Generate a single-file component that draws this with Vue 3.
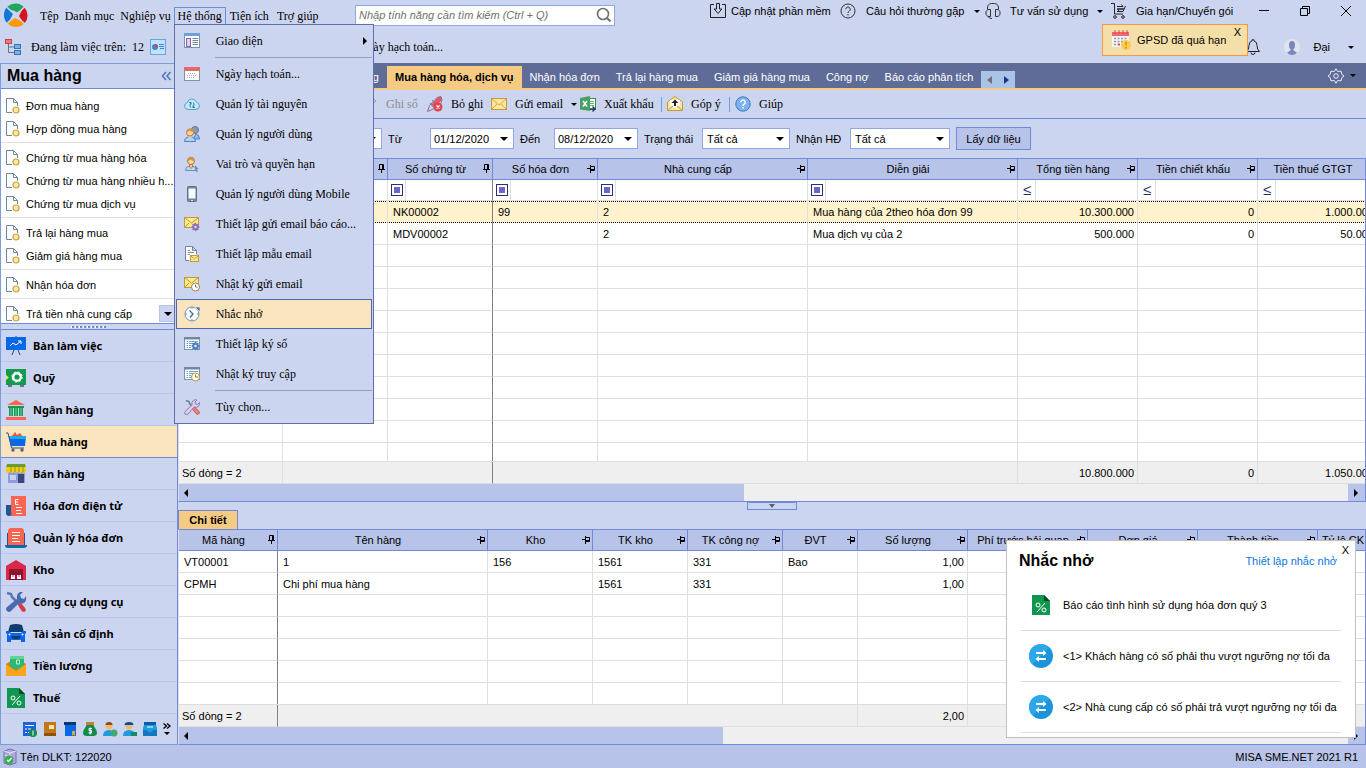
<script setup>
import { ref } from 'vue'

const pen = (c) => `fill="none" stroke="${c}"`
const badge = (x, y) => `<circle cx="${x}" cy="${y}" r="3" fill="#ffe9a0" stroke="#c8a04a" stroke-width="1.200"/>`

const icons = {
  logo: '<path d="M12 12 3.500 3.500A12 12 0 0 1 20.500 4.500Z" fill="#22a65b"/><path d="M12 12 20.500 4.500A12 12 0 0 1 20.500 20.500Z" fill="#d8151d"/><path d="M12 12 20.500 20.500A12 12 0 0 1 3.500 20.500Z" fill="#fb9a0c"/><path d="M12 12 3.500 20.500A12 12 0 0 1 3.500 3.500Z" fill="#0f78d4"/><path d="M2.500 4 21 21M21 3.500 3 20.500" fill="none" stroke="#ccd5f0" stroke-width="1.500"/><path d="M5.500 6.500 10.500 8 13 9.500 18.500 6 16 11 15 13 18.500 18.500 13 16 11 15 5 18.500 8 13 9 10.500Z" fill="#ccd5f0"/>',
  tree: `<rect x=".5" y=".5" width="6" height="4" fill="#f07c78" stroke="#b84a4a"/><path d="M3.500 5v8.500H9M3.500 8H9" ${pen('#66758c')}/><rect x="9.500" y="5.500" width="6" height="4" fill="#77b1ec" stroke="#3c6fb4"/><rect x="9.500" y="11.500" width="6" height="4" fill="#77b1ec" stroke="#3c6fb4"/>`,
  report: `<rect x=".5" y=".5" width="15" height="15" fill="#bfe3fb" stroke="#69a5dc"/><circle cx="5" cy="8" r="3" fill="#4b7fd0"/><path d="M5 8V5a3 3 0 0 1 3 3Z" fill="#d8405a"/><path d="M9 5.500h5M9 7.500h5M10 9.500h4" ${pen('#4b7fd0')}/>`,
  search: `<circle cx="7" cy="7" r="5.500" ${pen('#707070')} stroke-width="1.600"/><path d="m11 11 3.500 3.500" ${pen('#707070')} stroke-width="2"/>`,
  update: `<path d="M4 1.500H.5v13h15v-13H12" ${pen('#222')}/><path d="M6.500.5h3V6h2.300L8 10.500 4.200 6h2.300Z" ${pen('#222')}/>`,
  faq: `<circle cx="8" cy="8" r="7" ${pen('#333')}/><path d="M5.800 6.200a2.200 2.200 0 1 1 3.400 1.900Q8 8.800 8 10" ${pen('#333')}/><path d="M8 11v1.500" ${pen('#333')}/>`,
  headset: `<path d="M2.500 6.500V5a4.500 4.500 0 0 1 4-4.500h3a4.500 4.500 0 0 1 4 4.500v1.500" ${pen('#333')}/><path d="M5.500 6.500v7H4a3 3 0 0 1-3-3.500 3 3 0 0 1 3-3.500ZM10.500 6.500H12a3 3 0 0 1 3 3.500 3 3 0 0 1-3 3.500h-1.500ZM3 13.500Q4 15.500 7 15.500" ${pen('#333')}/>`,
  cart: `<path d="M0 .5h3.500V11H12M6 6h7M6 8.500h6L14.500 3" ${pen('#222')}/><path d="M6 3.500h6L10.500 1.500M12.500 6h-6l1.500 2" ${pen('#222')}/><circle cx="4" cy="14" r="1.300" ${pen('#222')}/><circle cx="12" cy="14" r="1.300" ${pen('#222')}/>`,
  bell: `<path d="M1.500 12.500h13Q12 10.500 12 6.500 12 2.500 9 2V.8H7V2Q4 2.500 4 6.500 4 10.500 1.500 12.500Z" ${pen('#222')}/><path d="M6 13.500a2 2 0 0 0 4 0" ${pen('#222')}/>`,
  avatar: '<circle cx="8" cy="8" r="8" fill="#e1e4ec"/><path d="M5 6a3 4 0 1 1 6 0q0 3-1.500 4v1.500L13 13.500Q11 16 8 16t-5-2.500L6.500 11.500V10Q5 9 5 6Z" fill="#7688bd"/>',
  gear: `<path d="m8 .8 1.800 2.700 3.300-.3.600 3L16 8l-2.300 1.800-.6 3-3.300-.3L8 15.200l-1.800-2.700-3.300.3-.6-3L0 8l2.300-1.800.6-3 3.300.3Z" ${pen('#e8ecf8')}/><circle cx="8" cy="8" r="2.300" ${pen('#e8ecf8')}/>`,
  calendarAlert: '<rect x="1" y="3" width="17" height="14" fill="#f4f4f6"/><path d="M1 2h17v4H1Z" fill="#f0686c"/><path d="M4 0v4M8 0v4M12 0v4M16 0v4" stroke="#d84850" fill="none"/><path d="M3 8.500h13M3 11.500h10M3 14.500h8" stroke="#9298a8" stroke-width="1.600" stroke-dasharray="2 1.500" fill="none"/><path d="M7 14.500h2" stroke="#e85058" stroke-width="2"/><circle cx="15" cy="15" r="5" fill="#fbcb50"/><path d="M15 11.500v4M15 17v1.500" stroke="#e88a20" stroke-width="1.600"/>',
  doc: `<path d="M.5.5h7l4 4V8M7.500.5v4h4M6 14.500H.5V.5" ${pen('#6c86a0')}/>` + badge(10, 12),
  layout: `<rect x=".5" y=".5" width="15" height="14" fill="#fff" stroke="#7b93ab"/><path d="M0 0h16v3H0Z" fill="#6aa3dc"/><rect x="2.500" y="5.500" width="4" height="8" fill="#e0cdf0" stroke="#8268a8"/><path d="M8.500 5.500H14M8.500 7.500H14M8.500 9.500H14M8.500 11.500H14" ${pen('#6c86a0')}/>`,
  calendar: `<rect x=".5" y="1.500" width="15" height="13" fill="#fff" stroke="#7b93ab"/><path d="M0 1h16v4H0Z" fill="#e0696b"/><path d="M4 7.500h8M3 9.500h10M3 11.500h7" ${pen('#a6b4c8')} stroke-dasharray="1 1"/>`,
  cloud: `<path d="M4 13.500a3.500 3.500 0 0 1-.7-6.900 4.800 4.800 0 0 1 9.200-.4A3.700 3.700 0 0 1 12 13.500Z" fill="#c4e8fb" stroke="#5f9fce"/><path d="M6.500 11.500q-1.500-2.500.5-5M5 6.500h2v2M9.500 6.500q1.500 2.500-.5 5M11 11.500H9v-2" ${pen('#3a78b8')}/>`,
  users: `<circle cx="11" cy="4" r="3.500" fill="#8a9aa8" stroke="#64788c"/><path d="M9 13h6.500q0-4-3.500-5Z" fill="#8cbcec" stroke="#4c84c4"/><path d="M.5 15.500q0-4 3.500-4.500h4q3.500.5 3.500 4.500Z" fill="#a8d4f8" stroke="#4c84c4"/><path d="M4.500 9.500v2L6 13l1.500-1.500v-2Z" fill="#f7c983"/><circle cx="6" cy="6.500" r="3.500" fill="#f9d8a0" stroke="#bf7640"/><path d="M2.500 6q.5-4 4-3.500T9.500 6q-3 0-4-1.500Q4.500 6 2.500 6Z" fill="#d89050"/>`,
  role: `<path d="M1.500 14.500q0-4 4-4.500h3q4 .5 4 4.500Z" fill="#b4dcf8" stroke="#5c94cc"/><path d="M5.500 8.500V11L7 12.500 8.500 11V8.500Z" fill="#f7c983" stroke="#bf7640"/><circle cx="7" cy="5" r="3.500" fill="#f9d8a0" stroke="#bf7640"/><path d="M3.500 5Q3.500.8 7 .8T10.500 5Q8 5 6.500 3.500 5.500 5 3.500 5Z" fill="#d09050"/><path d="m11 9.500 4 3.500h-2l1 2.500-1.500.5-.8-2.500-.7 1Z" fill="#7c8ca4"/>`,
  mobile: `<rect x="3.500" y=".5" width="9" height="15" rx="1" fill="#74869c" stroke="#5c7088"/><rect x="4.500" y="2.500" width="7" height="10" fill="#f4fafe"/><path d="M7 14.500h2" ${pen('#d8e0e8')}/>`,
  mailGear: `<rect x=".5" y="1.500" width="14" height="10" fill="#fde98c" stroke="#c69840"/><path d="m1 2 6.500 5L14 2M1 11l4-4M10 7l4 4" ${pen('#c69840')}/><path d="m11.500 6.500 1.200 1.600 2-.4-.3 2L16 11l-1.600 1.300.3 2-2-.4-1.200 1.600-1.200-1.600-2 .4.300-2L7 11l1.600-1.300-.3-2 2 .4Z" fill="#8c74b4"/><circle cx="11.500" cy="11" r="1.300" fill="#d8ccec"/>`,
  mailTemplate: `<path d="M5 14.500H1.500V.5h7l4 4V8M8.500.5v4h4" fill="#fff" stroke="#6c86a0"/><path d="M3.500 4.500H6M3.500 6.500H10M3.500 8.500H6" ${pen('#7c94ac')}/><rect x="6.500" y="9.500" width="8" height="6" fill="#fde98c" stroke="#c69840"/><path d="m7 10 3.500 3L14 10" ${pen('#c69840')}/>`,
  mailClock: `<rect x=".5" y="1.500" width="14" height="10" fill="#fde98c" stroke="#c69840"/><path d="m1 2 6.500 5L14 2M1 11l4-4" ${pen('#c69840')}/><circle cx="11.500" cy="11" r="4" fill="#fff" stroke="#9a8458"/><path d="M11.500 8.500V11h2" ${pen('#6c7484')}/>`,
  reminder: `<circle cx="8" cy="8" r="7" fill="#f8fcff" stroke="#7094bc"/><path d="M11 1h5v5Z" fill="#3d6eb4" stroke="#fae4be" stroke-width=".8"/><path d="M8 1v2M8 13v2M1 8h2M13 8h2" ${pen('#7094bc')}/><path d="M5.500 4.500 9 8l-3 3.500" ${pen('#4c6a8c')} stroke-width="1.300"/>`,
  signSetup: `<rect x=".5" y="1.500" width="15" height="12" fill="#fff" stroke="#7b93ab"/><path d="M0 1h16v2.500H0Z" fill="#74869c"/><path d="M2.500 5.500H4M5 5.500h9M2.500 7.500H4M5 7.500h4M2.500 9.500H4M5 9.500h2M2.500 11.500H4M5 11.500h2" ${pen('#6aa3dc')}/><path d="m11.500 5.500 1.200 1.600 2-.4-.3 2L16 10l-1.600 1.300.3 2-2-.4-1.200 1.600-1.200-1.600-2 .4.300-2L7 10l1.600-1.300-.3-2 2 .4Z" fill="#4c7cbc"/><circle cx="11.500" cy="10" r="1.300" fill="#dce8f8"/>`,
  accessLog: `<rect x=".5" y="1.500" width="15" height="12" fill="#fff" stroke="#7b93ab"/><path d="M0 1h16v2.500H0Z" fill="#74869c"/><path d="M2.500 5.500H4M5 5.500h9M2.500 7.500H4M5 7.500h4M2.500 9.500H4M5 9.500h2M2.500 11.500H4M5 11.500h2" ${pen('#6aa3dc')}/><circle cx="11.500" cy="11" r="4" fill="#fffbe8" stroke="#b89448"/><path d="M11.500 8.500V11H14" ${pen('#8c7440')}/>`,
  tools: `<path d="m2 1.500 3 1 .5 2L13 12" ${pen('#6c8094')} stroke-width="1.500"/><path d="m8.500 10 2-2 4.500 4.500q1 2-.5 2.500-1.500.8-2.500-.5Z" fill="#ec8480" stroke="#c45458"/><path d="M1 15q-1-1.500.3-2.700L8 6q-.8-3 1.500-4.700Q11.500.2 13 1l-2 2 .5 2 2 .5 2-2q.5 2.500-1.300 4-1.700 1.300-4 .5L4 15q-1.500 1.200-3 0Z" fill="#dccff0" stroke="#8c78ac"/>`,
  post: `<path d="m2 14 1-4L11 2l3 3-8 8Z" fill="#c8ccd4" stroke="#9ca0ac"/>`,
  unpost: `<path d="m.5 15.500 2-6L10 1.500l4-1 1 3-1 4-7.500 5.500Z" fill="#d8ccec" stroke="#8070a8"/><path d="m4 9 7-8 3 0 1 3-7 7Z" fill="#e05860"/><path d="m5 4 6 6M3 7l4 5" ${pen('#8070a8')}/><circle cx="11" cy="11" r="4.500" fill="#dc4850"/><path d="m9.500 9.500 3 3m0-3-3 3" ${pen('#fff')} stroke-width="1.300"/>`,
  mail: `<rect x=".5" y="2.500" width="15" height="11" fill="#fee69a" stroke="#c69840"/><path d="m1 3 7 6 7-6M1 13l5-5M15 13l-5-5" ${pen('#d0a850')}/>`,
  excel: `<rect x="8.500" y="2.500" width="7" height="11" fill="#fff" stroke="#3a8850"/><path d="M10 5.500h4M10 7.500h4M10 9.500h4" ${pen('#68b07c')}/><path d="m0 2 10-2v15L0 13.500Z" fill="#47a066"/><path d="m3 5 4 5.500M7 5l-4 5.500" ${pen('#fff')} stroke-width="1.500"/><path d="M10 13h4M12.500 10.500 15 13l-2.500 2.500" ${pen('#243c50')} stroke-width="1.400"/>`,
  feedback: `<path d="M.5 6 8 .5 15.500 6v8.500H.5Z" fill="#fee69a" stroke="#c69840"/><path d="M3 4h10v5l-5 3-5-3Z" fill="#fff"/><path d="m1 14 5-4M15 14l-5-4" ${pen('#c69840')}/><path d="M8 3.500 4.500 7H7v3h2V7h2.500Z" fill="#222"/>`,
  helpBlue: `<circle cx="8" cy="8" r="7.200" fill="#7db2f2" stroke="#4078b8"/><path d="M5.800 6.200a2.200 2.200 0 1 1 3.400 1.900Q8 8.800 8 10M8 11v1.500" ${pen('#fff')} stroke-width="1.500"/>`,
  pin: `<path d="M3.500.5h4v5h-4ZM2 5.500h7M5.500 6v3M6.500 1v4" ${pen('#000')}/>`,
  pinSide: `<path d="M4.500 2.500h4v4h-4ZM4.500 1v8M1 4.500h3M5 5.500h4" ${pen('#000')}/>`,
  desk: `<path d="M0 1h20v13H0Z" fill="#0868e8"/><path d="M10 0v1M8 14l-2 5M12 14l2 5" ${pen('#1c508c')}/><path d="m4 10 3-3 3 2 5-4M12 5h3v3" ${pen('#fff')}/>`,
  fund: `<path d="M2 17h4v2H2ZM14 17h4v2h-4Z" fill="#687484"/><path d="M0 1h20v16H0Z" fill="#119a50"/><path d="m0 7 3 2.500L0 12Z" fill="#f4e040"/><circle cx="11" cy="9" r="3.800" ${pen('#fff')} stroke-width="2.400"/><circle cx="11" cy="9" r="5.200" ${pen('#fff')} stroke-dasharray="2 2.100"/>`,
  bank: `<path d="m10 0 9 5H1Z" fill="#fa6450"/><path d="M2 6h16v2H2ZM3 8h4v8H3ZM8 8h4v8H8ZM13 8h4v8h-4Z" fill="#119a50"/><path d="M5 8v8M10 8v8M15 8v8" ${pen('#80d0a0')}/><path d="M0 17h20v3H0Z" fill="#fa6450"/>`,
  buy: `<path d="m6 4 3-4 2 3 3-2 3 4Z" fill="#e05840"/><path d="M3 4h17l-1 10H5Z" fill="#0868e8"/><path d="M3 4h17l-.5 3H3.500Z" fill="#20a8e8"/><path d="M0 1h2l3.500 15H18" ${pen('#24508c')}/><circle cx="7" cy="18" r="1.700" fill="#586070"/><circle cx="16" cy="18" r="1.700" fill="#586070"/>`,
  sell: `<path d="M2 7h17v12H2Z" fill="#8c9cdc"/><path d="M12 10h6v9h-6Z" fill="#384878"/><path d="M4 11h6v5H4Z" fill="#c4d0f4"/><path d="M1 0h18l1 4H0Z" fill="#6c9c28"/><path d="M0 3h20v5q-2 2-4 0-2 2-4 0-2 2-4 0-2 2-4 0-2 2-4 0Z" fill="#fac81c"/><path d="M5 3v5M9 3v5M13 3v5M17 3v5" ${pen('#6c9c28')}/>`,
  einvoice: `<path d="M0 9h6v11H3q-3 0-3-3Z" fill="#1c5890"/><path d="M5 0h15v20H4q2-1 1-4Z" fill="#fa6450"/><path d="M12.500 3.500H9.500V8.500H12.500M9.500 6H12M10 11.500h6M10 14.500h5M10 17.500h6" ${pen('#fff')}/>`,
  invoiceMgmt: `<path d="M1 5h18v12H1Z" fill="#1c5890"/><path d="M4 0h12l2 2v15H2V2Z" fill="#fa6450"/><path d="M6 4.500h8M6 7.500h8M6 10.500h6M6 13.500h8" ${pen('#fff')}/><path d="M-1 17h22v1q-1 2-3 2H2q-3 0-3-3Z" fill="#0868a8"/>`,
  store: `<path d="M0 6 10 0l10 6v14H0Z" fill="#dc2848"/><path d="M3 9h14v11H3Z" fill="#8c1430"/><path d="M5 15h4v4H5ZM11 15h4v4h-4Z" fill="#fff"/><path d="M7 15v2M13 15v2" ${pen('#dc2848')}/>`,
  toolkit: `<path d="m1 1 4 1 1 3 9 9" ${pen('#5878b0')} stroke-width="2.500"/><path d="m12 13 3-2 4 5q2 3-1 4-2 0-3-2Z" fill="#d83848"/><path d="M1 19q-2-2 0-4L11 7Q10 2 14 0l3 0-3 3 1 3 3 1 2-3q1 5-2 7-3 1-5 0L5 19q-2 2-4 0Z" fill="#4a6ab0"/>`,
  car: `<path d="M4 1q6-2 12 0l2 7H2Z" fill="#103c70"/><path d="M0 7h3l2 2h10l2-2h3v2l-1 1v8h-4v-2H5v2H1v-8L0 9Z" fill="#0868e8"/><path d="M5 12h10l-2 3H7Z" fill="#103c70"/><circle cx="3.500" cy="10.500" r="1" fill="#fff"/><circle cx="16.500" cy="10.500" r="1" fill="#fff"/>`,
  salary: `<path d="M0 8 10 2l10 6v12H0Z" fill="#e07810"/><path d="M4 0h14v13H4Z" fill="#2cb870"/><path d="M4 0h14v3H4Z" fill="#60d498"/><path d="M10.500 4h3v4h-3Z" ${pen('#c8f0d8')}/><path d="m0 8 10 7 10-7v12H0Z" fill="#fba41c"/>`,
  tax: `<path d="M1 0h12l6 6v14H1Z" fill="#119650"/><path d="M13 0v6h6Z" fill="#064c28"/><circle cx="7" cy="10" r="2" ${pen('#fff')}/><circle cx="13" cy="15" r="2" ${pen('#fff')}/><path d="m6 17 8-9" ${pen('#fff')}/>`,
  miniList: '<path d="M0 0h13v14H0Z" fill="#1c64dc"/><path d="M2 3.500h9M2 7h2M5 7h3M2 10.500h2M5 10.500h2" stroke="#fff" fill="none"/><circle cx="10" cy="11" r="4" fill="#128c4c"/><path d="M10 8.500v5" stroke="#fff"/>',
  miniBook: '<path d="M1 0h12v14H1Z" fill="#c07818"/><path d="M1 11h12v3H1Z" fill="#8c5010"/><path d="M6 3h5v4H6Z" fill="#ffe4a8"/>',
  miniFlag: '<path d="M1 0h12v3H1Z" fill="#0c3870"/><path d="M2 3h11v11H2Z" fill="#0868e8"/><path d="M9 9h3v5l-1.500-1.500L9 14Z" fill="#f4a020"/>',
  miniBag: '<path d="M3 0h8v4H3Z" fill="#c08030"/><path d="M4 3h6q4 5 4 8 0 3-4 3H4q-4 0-4-3 0-3 4-8Z" fill="#128c4c"/><path d="M9 6.500H6v2h2.500v2.500H5.500M7.200 5.500v7" stroke="#fff" fill="none"/>',
  miniPerson: '<circle cx="6" cy="4" r="3.500" fill="#f6b868"/><path d="M2.500 3q0-3 3.500-3t3.500 3Z" fill="#8c4c20"/><path d="M0 14q0-6 6-6t6 6Z" fill="#209cdc"/><circle cx="11" cy="11" r="3.500" fill="#40a874"/>',
  miniWorker: '<circle cx="6" cy="4" r="3.500" fill="#f6b868"/><path d="M1.500 3q0-3 4.500-3t4.500 3Z" fill="#104c90"/><path d="M0 14q0-6 6-6t6 6Z" fill="#209cdc"/><path d="M8 10h6v4H8Z" fill="#128c6c"/>',
  miniInbox: '<path d="M2 0h10l2 6v8H0V6Z" fill="#209cdc"/><path d="M1 0h12v3H1Z" fill="#0c5ca8"/><path d="M0 8h4l1 2h4l1-2h4v6H0Z" fill="#1478c0"/><path d="M4 5h6" stroke="#fff"/>',
  server: `<path d="m1 2 6-2 6 2v12l-6 2-6-2Z" fill="#b0a8dc" stroke="#7870a8"/><path d="m1 2 6 2 6-2M7 4v10M2 6l4 1.500" ${pen('#e4e0f8')}/><circle cx="6" cy="11" r="4.500" fill="#34b050"/><path d="m4 11 1.500 1.500L8.500 9" ${pen('#fff')} stroke-width="1.400"/>`,
  swap: `<circle cx="12" cy="12" r="12" fill="#1c94dc"/><path d="M12 0a12 12 0 0 0-8.500 20.500l17-17A12 12 0 0 0 12 0Z" fill="#30b0ee" opacity=".7"/><path d="M7 9h9M8 15h9" ${pen('#fff')} stroke-width="1.800"/><path d="m14 6 3.500 3L14 12ZM10 12l-3.500 3L10 18Z" fill="#fff"/>`
}

const appMenus = ['Tệp', 'Danh mục', 'Nghiệp vụ']
const appMenusAfter = ['Tiện ích', 'Trợ giúp']

const systemMenu = [
  { icon: 'layout', text: 'Giao diện', sub: true },
  { icon: 'calendar', text: 'Ngày hạch toán...', sep: true },
  { icon: 'cloud', text: 'Quản lý tài nguyên' },
  { icon: 'users', text: 'Quản lý người dùng' },
  { icon: 'role', text: 'Vai trò và quyền hạn' },
  { icon: 'mobile', text: 'Quản lý người dùng Mobile' },
  { icon: 'mailGear', text: 'Thiết lập gửi email báo cáo...' },
  { icon: 'mailTemplate', text: 'Thiết lập mẫu email' },
  { icon: 'mailClock', text: 'Nhật ký gửi email' },
  { icon: 'reminder', text: 'Nhắc nhở', active: true },
  { icon: 'signSetup', text: 'Thiết lập ký số' },
  { icon: 'accessLog', text: 'Nhật ký truy cập' },
  { icon: 'tools', text: 'Tùy chọn...', sep: true }
]

const taskGroups = [
  ['Đơn mua hàng', 'Hợp đồng mua hàng'],
  ['Chứng từ mua hàng hóa', 'Chứng từ mua hàng nhiều h...', 'Chứng từ mua dịch vụ'],
  ['Trả lại hàng mua', 'Giảm giá hàng mua'],
  ['Nhận hóa đơn'],
  ['Trả tiền nhà cung cấp']
]

const modules = [
  ['desk', 'Bàn làm việc'], ['fund', 'Quỹ'], ['bank', 'Ngân hàng'], ['buy', 'Mua hàng'],
  ['sell', 'Bán hàng'], ['einvoice', 'Hóa đơn điện tử'], ['invoiceMgmt', 'Quản lý hóa đơn'],
  ['store', 'Kho'], ['toolkit', 'Công cụ dụng cụ'], ['car', 'Tài sản cố định'],
  ['salary', 'Tiền lương'], ['tax', 'Thuế']
]
const activeModule = ref('Mua hàng')
const trayIcons = ['miniList', 'miniBook', 'miniFlag', 'miniBag', 'miniPerson', 'miniWorker', 'miniInbox']

const tabs = ['Mua hàng hóa, dịch vụ', 'Nhận hóa đơn', 'Trả lại hàng mua', 'Giảm giá hàng mua', 'Công nợ', 'Báo cáo phân tích']

const fromDate = ref('01/12/2020')
const toDate = ref('08/12/2020')

const voucherCols = [
  { w: 104, t: '', pin: 'pin' },
  { w: 105, t: '', pin: 'pin' },
  { w: 105, t: 'Số chứng từ', pin: 'pin', frozen: true },
  { w: 105, t: 'Số hóa đơn', pin: 'pinSide' },
  { w: 210, t: 'Nhà cung cấp', pin: 'pinSide' },
  { w: 210, t: 'Diễn giải', pin: 'pinSide' },
  { w: 120, t: 'Tổng tiền hàng', pin: 'pinSide', num: true },
  { w: 120, t: 'Tiền chiết khấu', pin: 'pinSide', num: true },
  { w: 120, t: 'Tiền thuế GTGT', pin: 'pinSide', num: true }
]
const voucherRows = [
  ['', '', 'NK00002', '99', '2', 'Mua hàng của 2theo hóa đơn 99', '10.300.000', '0', '1.000.000'],
  ['', '', 'MDV00002', '', '2', 'Mua dịch vụ của 2', '500.000', '0', '50.000']
]

const itemCols = [
  { w: 99, t: 'Mã hàng', pin: 'pin', frozen: true },
  { w: 210, t: 'Tên hàng', pin: 'pinSide' },
  { w: 105, t: 'Kho', pin: 'pinSide' },
  { w: 95, t: 'TK kho', pin: 'pinSide' },
  { w: 95, t: 'TK công nợ', pin: 'pinSide' },
  { w: 75, t: 'ĐVT', pin: 'pinSide' },
  { w: 110, t: 'Số lượng', pin: 'pinSide', num: true },
  { w: 120, t: 'Phí trước hải quan', pin: 'pinSide', num: true },
  { w: 110, t: 'Đơn giá', pin: 'pinSide', num: true },
  { w: 120, t: 'Thành tiền', pin: 'pinSide', num: true },
  { w: 60, t: 'Tỷ lệ CK', pin: 'pinSide', num: true }
]
const itemRows = [
  ['VT00001', '1', '156', '1561', '331', 'Bao', '1,00', '', '', '', ''],
  ['CPMH', 'Chi phí mua hàng', '', '1561', '331', '', '1,00', '', '', '', '']
]

const reminders = [
  ['tax', 'Báo cáo tình hình sử dụng hóa đơn quý 3'],
  ['swap', '<1> Khách hàng có số phải thu vượt ngưỡng nợ tối đa'],
  ['swap', '<2> Nhà cung cấp có số phải trả vượt ngưỡng nợ tối đa']
]
</script>

<template>
  <div class="app">
    <header class="top">
      <div class="top-left">
        <nav class="menubar">
          <svg class="logo" viewBox="0 0 24 24" v-html="icons.logo"></svg>
          <button v-for="m in appMenus" :key="m" class="menu-btn serif">{{ m }}</button>
          <div class="menu-anchor">
            <button class="menu-btn open serif">Hệ thống</button>
            <ul class="dropdown">
              <li v-for="m in systemMenu" :key="m.text" :class="{ sep: m.sep }">
                <button class="drop-item serif" :class="{ active: m.active }">
                  <svg class="i16" viewBox="0 0 16 16" v-html="icons[m.icon]"></svg>
                  <span>{{ m.text }}</span>
                  <i v-if="m.sub" class="arrow right"></i>
                </button>
              </li>
            </ul>
          </div>
          <button v-for="m in appMenusAfter" :key="m" class="menu-btn serif">{{ m }}</button>
        </nav>
        <div class="search">
          <input type="text" aria-label="Tìm kiếm" placeholder="Nhập tính năng cần tìm kiếm (Ctrl + Q)" />
          <button aria-label="Tìm"><svg class="i16" viewBox="0 0 16 16" v-html="icons.search"></svg></button>
        </div>
      </div>
      <div class="top-links">
        <button class="link-update"><svg class="i16" viewBox="0 0 16 16" v-html="icons.update"></svg>Cập nhật phần mềm</button>
        <button class="link-faq"><svg class="i16" viewBox="0 0 16 16" v-html="icons.faq"></svg>Câu hỏi thường gặp<i class="arrow down"></i></button>
        <button class="link-support"><svg class="i16" viewBox="0 0 16 16" v-html="icons.headset"></svg>Tư vấn sử dụng<i class="arrow down"></i></button>
        <button class="link-renew"><svg class="i16" viewBox="0 0 16 16" v-html="icons.cart"></svg>Gia hạn/Chuyển gói</button>
        <button class="win" aria-label="Thu nhỏ"><svg viewBox="0 0 12 12"><path d="M1 5.500h10" stroke="#000" /></svg></button>
        <button class="win" aria-label="Khôi phục"><svg viewBox="0 0 12 12"><path d="M1.500 3.500h7v7h-7ZM3.500 3.500v-2h7v7h-2" fill="none" stroke="#000" /></svg></button>
        <button class="win" aria-label="Đóng"><svg viewBox="0 0 12 12"><path d="m1 1 10 10M11 1 1 11" stroke="#000" /></svg></button>
      </div>
      <div class="context serif">
        <svg class="i16" viewBox="0 0 16 16" v-html="icons.tree"></svg>
        <span class="working">Đang làm việc trên:&nbsp; 12</span>
        <svg class="i16" viewBox="0 0 16 16" v-html="icons.report"></svg>
        <span class="posting-date">Ngày hạch toán...</span>
      </div>
      <div class="account">
        <svg class="i16" viewBox="0 0 16 16" v-html="icons.bell"></svg>
        <svg class="i16 face" viewBox="0 0 16 16" v-html="icons.avatar"></svg>
        <span>Đại</span>
        <i class="arrow down"></i>
      </div>
      <div class="toast">
        <svg viewBox="0 0 20 20" v-html="icons.calendarAlert"></svg>
        <span>GPSD đã quá hạn</span>
        <button aria-label="Đóng">X</button>
      </div>
    </header>

    <div class="body">
      <aside class="side">
        <div class="side-head"><h1>Mua hàng</h1><button aria-label="Thu gọn"><svg viewBox="0 0 10 10"><path d="M5 1 1.500 5 5 9M9.500 1 6 5l3.500 4" fill="none" stroke="#4a72b8" stroke-width="1.400" /></svg></button></div>
        <div class="tasks">
          <ul v-for="(g, i) in taskGroups" :key="i">
            <li v-for="t in g" :key="t"><a href="#"><svg viewBox="0 0 14 16" v-html="icons.doc"></svg>{{ t }}</a></li>
          </ul>
          <button class="more" aria-label="Cuộn xuống"><i class="arrow down big"></i></button>
        </div>
        <div class="side-split"><span></span></div>
        <nav class="modules">
          <button v-for="[icon, name] in modules" :key="name" :class="{ active: name === activeModule }" @click="activeModule = name">
            <svg viewBox="0 0 20 20" v-html="icons[icon]"></svg>{{ name }}
          </button>
        </nav>
        <div class="tray">
          <button v-for="t in trayIcons" :key="t" :aria-label="t"><svg viewBox="0 0 14 14" v-html="icons[t]"></svg></button>
          <button class="tray-more" aria-label="Thêm"><svg viewBox="0 0 8 12"><path d="m.5.500 3 2.500-3 2.500M4 .5 7 3 4 5.500" fill="none" stroke="#000" stroke-width="1.300" /><path d="M1 9h6L4 12Z" /></svg></button>
        </div>
      </aside>

      <main class="content">
        <div class="tabs">
          <button class="tab prev">Hợp đồng mua hàng</button>
          <button v-for="(t, i) in tabs" :key="t" class="tab" :class="{ active: i === 0 }">{{ t }}</button>
          <div class="tab-nav">
            <button aria-label="Trước"><i class="tri left"></i></button>
            <button aria-label="Sau"><i class="tri next"></i></button>
          </div>
          <button class="settings" aria-label="Cài đặt"><svg class="i16" viewBox="0 0 16 16" v-html="icons.gear"></svg><i class="arrow down"></i></button>
        </div>

        <div class="toolbar serif">
          <button class="tool-post" disabled><svg class="i16" viewBox="0 0 16 16" v-html="icons.post"></svg>Ghi sổ</button>
          <button class="tool-unpost"><svg class="i16" viewBox="0 0 16 16" v-html="icons.unpost"></svg>Bỏ ghi</button>
          <button class="tool-mail"><svg class="i16" viewBox="0 0 16 16" v-html="icons.mail"></svg>Gửi email<i class="arrow down"></i></button>
          <button class="tool-export"><svg class="i16" viewBox="0 0 16 16" v-html="icons.excel"></svg>Xuất khẩu</button>
          <span class="bar"></span>
          <button class="tool-feedback"><svg class="i16" viewBox="0 0 16 16" v-html="icons.feedback"></svg>Góp ý</button>
          <span class="bar"></span>
          <button><svg class="i16" viewBox="0 0 16 16" v-html="icons.helpBlue"></svg>Giúp</button>
        </div>

        <form class="filters" @submit.prevent>
          <div class="combo"><select aria-label="Kỳ"><option></option></select></div>
          <label for="from">Từ</label>
          <div class="date"><input id="from" v-model="fromDate" type="text" /><button type="button" aria-label="Chọn ngày bắt đầu"><i class="arrow down big"></i></button></div>
          <label for="to">Đến</label>
          <div class="date"><input id="to" v-model="toDate" type="text" /><button type="button" aria-label="Chọn ngày kết thúc"><i class="arrow down big"></i></button></div>
          <label for="status">Trạng thái</label>
          <div class="combo"><select id="status"><option>Tất cả</option></select></div>
          <label for="invoice">Nhận HĐ</label>
          <div class="combo"><select id="invoice"><option>Tất cả</option></select></div>
          <button class="load">Lấy dữ liệu</button>
        </form>

        <section class="grid master">
          <div class="rows">
            <table>
              <colgroup><col v-for="(c, i) in voucherCols" :key="i" :style="{ width: c.w + 'px' }" /></colgroup>
              <thead>
                <tr><th v-for="(c, i) in voucherCols" :key="i"><div><span>{{ c.t }}</span><svg viewBox="0 0 10 10" v-html="icons[c.pin]"></svg></div></th></tr>
              </thead>
              <tbody>
                <tr class="filter-row">
                  <td v-for="(c, i) in voucherCols" :key="i" :class="{ frozen: c.frozen }"><span class="op"><b v-if="c.num">≤</b><i v-else></i></span></td>
                </tr>
                <tr v-for="(r, ri) in voucherRows" :key="ri" :class="{ selected: ri === 0 }">
                  <td v-for="(v, i) in r" :key="i" :class="{ frozen: voucherCols[i].frozen, num: voucherCols[i].num }">{{ v }}</td>
                </tr>
                <tr v-for="n in 30" :key="'e' + n"><td v-for="(c, i) in voucherCols" :key="i" :class="{ frozen: c.frozen }"></td></tr>
              </tbody>
            </table>
          </div>
          <table class="totals">
            <colgroup><col v-for="(c, i) in voucherCols" :key="i" :style="{ width: c.w + 'px' }" /></colgroup>
            <tbody><tr>
              <td>Số dòng = 2</td><td class="frozen" colspan="2"></td><td colspan="3"></td>
              <td class="num">10.800.000</td><td class="num">0</td><td class="num">1.050.000</td>
            </tr></tbody>
          </table>
          <div class="scroll"><button class="thumb" aria-label="Cuộn trái"><i class="arrow left"></i></button><button class="end" aria-label="Cuộn phải"><i class="arrow right"></i></button></div>
        </section>

        <div class="splitter"><button aria-label="Thu gọn chi tiết"><i></i></button></div>
        <div class="detail-tabs"><button>Chi tiết</button></div>

        <section class="grid detail">
          <div class="rows">
            <table>
              <colgroup><col v-for="(c, i) in itemCols" :key="i" :style="{ width: c.w + 'px' }" /></colgroup>
              <thead>
                <tr><th v-for="(c, i) in itemCols" :key="i"><div><span>{{ c.t }}</span><svg viewBox="0 0 10 10" v-html="icons[c.pin]"></svg></div></th></tr>
              </thead>
              <tbody>
                <tr v-for="(r, ri) in itemRows" :key="ri">
                  <td v-for="(v, i) in r" :key="i" :class="{ frozen: itemCols[i].frozen, num: itemCols[i].num }">{{ v }}</td>
                </tr>
                <tr v-for="n in 8" :key="'e' + n"><td v-for="(c, i) in itemCols" :key="i" :class="{ frozen: c.frozen }"></td></tr>
              </tbody>
            </table>
          </div>
          <table class="totals">
            <colgroup><col v-for="(c, i) in itemCols" :key="i" :style="{ width: c.w + 'px' }" /></colgroup>
            <tbody><tr>
              <td class="frozen">Số dòng = 2</td><td colspan="5"></td><td class="num">2,00</td><td></td><td></td><td></td><td></td>
            </tr></tbody>
          </table>
          <div class="scroll"><button class="thumb" aria-label="Cuộn trái"><i class="arrow left"></i></button><button class="end" aria-label="Cuộn phải"><i class="arrow right"></i></button></div>
        </section>
      </main>
    </div>

    <footer class="status">
      <svg class="i16" viewBox="0 0 16 16" v-html="icons.server"></svg>
      <span>Tên DLKT: 122020</span>
      <span class="version">MISA SME.NET 2021 R1</span>
    </footer>

    <section class="reminders">
      <button class="close" aria-label="Đóng">X</button>
      <div class="rem-head"><h2>Nhắc nhở</h2><a href="#">Thiết lập nhắc nhở</a></div>
      <ul>
        <li v-for="[icon, text] in reminders" :key="text">
          <svg :class="icon" :viewBox="icon === 'tax' ? '0 0 20 20' : '0 0 24 24'" v-html="icons[icon]"></svg>
          <span>{{ text }}</span>
        </li>
      </ul>
    </section>
  </div>
</template>

<style>
body { margin: 0; overflow: hidden; }
</style>

<style scoped>
.app { position: relative; display: flex; flex-direction: column; height: 100vh; background: #ccd5f0; color: #000; font: 11px/14px "Liberation Sans", Arial, sans-serif; overflow: hidden; white-space: nowrap; }
.app *, .app *::before, .app *::after { box-sizing: border-box; }
button { border: 0; padding: 0; margin: 0; background: none; font: inherit; color: inherit; display: flex; align-items: center; }
ul { list-style: none; margin: 0; padding: 0; }
a { color: inherit; text-decoration: none; }
svg { display: block; flex: none; overflow: visible; }
.serif { font: 12px/14px "Liberation Serif", "Times New Roman", serif; }
.i16 { width: 16px; height: 16px; }
.arrow { display: block; flex: none; border: 3px solid transparent; }
.arrow.down { border-top-color: #000; border-bottom-width: 0; }
.arrow.down.big { border-width: 4px 4px 0; }
.arrow.right { border-width: 4px 0 4px 4px; border-left-color: #000; }
.arrow.left { border-width: 4px 4px 4px 0; border-right-color: #000; }

.top { position: relative; z-index: 3; display: grid; grid-template-columns: 1fr auto; grid-template-rows: 30px 34px; flex: none; height: 63px; }
.top-left { display: flex; align-items: center; }
.menubar { display: flex; align-items: center; width: 355px; padding-left: 4px; }
.logo { width: 24px; height: 24px; margin-right: 9px; }
.menu-btn { padding: 0 2px; height: 18px; border: 1px solid transparent; margin-top: 2px; }
.menu-anchor { position: relative; }
.menu-btn.open { width: 52px; justify-content: center; padding: 0; border-color: #6c8cd8; border-bottom-color: #fff; }
.menu-anchor ~ .menu-btn { padding: 0 3px; }
.dropdown { position: absolute; left: 0; top: 19px; width: 200px; padding: 1px; background: #ccd5f0; border: 1px solid #5f6fae; }
.dropdown li { height: 30px; }
.dropdown li.sep { height: 33px; padding-top: 3px; background: linear-gradient(#9aa0b0, #9aa0b0) 39px 1px / 100% 1px no-repeat; }
.drop-item { width: 100%; height: 30px; padding: 0 4px 0 7px; gap: 16px; border: 1px solid transparent; }
.drop-item .arrow { margin-left: auto; }
.drop-item.active { background: #fae4be; border-color: #5068b0; }
.search { display: flex; align-items: center; width: 260px; height: 21px; background: #fff; border: 1px solid #8fa8e4; padding-right: 2px; }
.search input { flex: 1; min-width: 0; border: 0; outline: 0; padding: 0 3px; background: none; font: italic 11px/14px "Liberation Sans", Arial, sans-serif; }
.search input::placeholder { color: #707070; opacity: 1; }
.top-links { display: flex; align-items: center; padding-bottom: 8px; padding-right: 14px; }
.top-links button { gap: 5px; }
.top-links .link-update { width: 130px; }
.top-links .link-faq { width: 145px; gap: 10px; }
.top-links .link-support { width: 126px; gap: 9px; }
.top-links .link-renew { width: 147px; gap: 9px; }
.top-links .win { margin-left: 29px; }
.top-links .link-renew + .win { margin-left: 0; }
.win svg { width: 12px; height: 12px; }
.context { display: flex; align-items: center; padding-left: 5px; gap: 10px; }
.working { width: 109px; }
.posting-date { width: 276px; text-align: right; margin-right: auto; }
.context .i16 + .posting-date { margin-left: -9px; }
.account { display: flex; align-items: center; justify-self: end; padding-right: 12px; }
.account .face { margin: 0 13px 0 23px; }
.account .arrow { margin-left: 18px; }
.toast { position: absolute; right: 118px; top: 24px; display: flex; align-items: center; width: 146px; height: 32px; padding-left: 8px; gap: 6px; background: #f5dfa8; border: 1px solid #f59a44; }
.toast svg { width: 20px; height: 20px; }
.toast button { position: absolute; top: 0; right: 6px; }

.body { display: grid; grid-template-columns: 178px minmax(0, 1fr); flex: 1; min-height: 0; }
.side { display: flex; flex-direction: column; min-height: 0; border-left: 1px solid #7c9cd8; border-right: 1px solid #6f8ad8; border-bottom: 1px solid #7c9cd8; }
.side-head { display: flex; align-items: center; justify-content: space-between; height: 26px; padding: 0 6px; border-top: 1px solid #7c9cd8; border-bottom: 1px solid #6f8ad8; }
.side-head h1 { margin: 0; font-size: 16px; line-height: 20px; font-weight: bold; }
.side-head svg { width: 10px; height: 10px; }
.tasks { position: relative; flex: 1; min-height: 0; overflow: hidden; padding-top: 5px; background: #fff; }
.tasks ul + ul { margin-top: 2px; padding-top: 3px; border-top: 1px solid #dfe0e4; }
.tasks a { display: flex; align-items: center; gap: 6px; height: 23px; padding-left: 5px; }
.tasks a svg { width: 14px; height: 16px; }
.more { position: absolute; right: 0; bottom: 1px; width: 18px; height: 17px; justify-content: center; background: #ccd5f0; border: 1px solid #b7c3e8; }
.side-split { flex: none; display: flex; align-items: center; justify-content: center; height: 7px; border-top: 1px solid #6f8ad8; border-bottom: 1px solid #6f8ad8; }
.side-split span { width: 36px; height: 2px; background: repeating-linear-gradient(90deg, #fff 0 1px, #7088c8 1px 3px, transparent 3px 4px); }
.modules button { width: 100%; height: 32px; padding-left: 5px; gap: 7px; border-bottom: 1px solid #b9c7ee; font: bold 11px/16px "Noto Sans", "Open Sans", sans-serif; }
.modules button.active { background: #fae4be; border-bottom-color: #6f8ad8; }
.modules svg { width: 20px; height: 20px; }
.tray { display: flex; align-items: center; height: 30px; padding-left: 22px; gap: 6px; }
.tray svg { width: 14px; height: 14px; }
.tray .tray-more svg { width: 8px; height: 12px; }

.content { display: flex; flex-direction: column; min-width: 0; min-height: 0; }
.tabs { flex: none; display: flex; align-items: flex-end; height: 27px; background: #5f6c98; border-bottom: 2px solid #f5cb84; color: #fff; }
.tab { height: 22px; padding: 0 8px; }
.tab.prev { width: 209px; justify-content: flex-end; }
.tab.active { background: #f5cb84; color: #000; font-weight: bold; }
.tab-nav { display: flex; height: 17px; background: #a9c4e6; margin-right: auto; }
.tab-nav button { width: 17px; justify-content: center; }
.tri { border: 5px solid transparent; border-width: 4px 5px 4px 0; border-right-color: #707070; }
.tri.next { border-width: 4px 0 4px 5px; border-left-color: #103c8c; }
.settings { align-self: center; gap: 6px; padding-right: 10px; }
.toolbar { flex: none; display: flex; align-items: center; height: 29px; padding-left: 184px; border-bottom: 1px solid #6f8ad8; }
.toolbar button { gap: 8px; margin-right: 6px; }
.toolbar button:disabled { color: #8c8c8c; }
.toolbar .tool-post { width: 59px; }
.toolbar .tool-unpost { width: 58px; }
.toolbar .tool-mail { width: 83px; }
.toolbar .tool-export { width: 75px; }
.toolbar .tool-feedback { width: 56px; }
.bar { width: 1px; height: 15px; margin-right: 5px; background: #6ca0dc; }
.filters { flex: none; display: grid; grid-template-columns: 204px 36px 84px 28px 84px 52px 88px 48px 100px 75px; column-gap: 6px; align-items: center; height: 39px; }
.date, .combo { display: flex; align-items: center; height: 21px; background: #fff; border: 1px solid #8fa8e4; position: relative; }
.date input { flex: 1; min-width: 0; border: 0; outline: 0; padding: 0 3px; background: none; font: inherit; }
.date button { padding: 0 5px; }
.combo select { appearance: none; flex: 1; min-width: 0; height: 19px; border: 0; outline: 0; background: none; padding: 0 4px; font: inherit; color: inherit; }
.combo::after { content: ""; position: absolute; right: 5px; top: 8px; border: 4px solid transparent; border-top-color: #000; border-bottom-width: 0; pointer-events: none; }
.load { height: 23px; justify-content: center; background: #b7c3e8; border: 1px solid #6f8ad8; }

.grid { display: flex; flex-direction: column; min-height: 0; border: 1px solid #6f8ad8; border-left-color: #dfdfdf; background: #fff; overflow: hidden; }
.master { flex: 1; }
.detail { flex: none; height: 216px; }
.rows { flex: 1; min-height: 0; overflow: hidden; }
table { table-layout: fixed; width: 1px; border-collapse: separate; border-spacing: 0; }
th { height: 21px; padding: 0; font-weight: normal; background: #b7c3e8; border-right: 1px solid #6f8ad8; border-bottom: 1px solid #6f8ad8; }
th div { display: flex; align-items: center; }
th span { flex: 1; text-align: center; overflow: hidden; padding-left: 2px; }
th svg { width: 10px; height: 10px; margin-right: 1px; }
td { height: 22px; padding: 0 3px 0 5px; overflow: hidden; border-right: 1px solid #dfdfdf; border-bottom: 1px solid #dfdfdf; }
td.frozen { border-right-color: #808080; }
td.num { text-align: right; }
.filter-row td { height: 21px; padding: 0; }
.op { display: flex; align-items: center; width: 18px; height: 20px; padding-left: 3px; border-right: 1px solid #dfdfdf; }
.op i { width: 12px; height: 12px; border: 1px solid #303068; background: #6868cc; box-shadow: inset 0 0 0 2px #fff; }
.op b { width: 12px; text-align: center; font-weight: normal; color: #303068; font-size: 15px; }
.selected { background: repeating-linear-gradient(90deg, #000 0 1px, transparent 1px 2px) 0 0 / 100% 1px no-repeat, repeating-linear-gradient(90deg, #000 0 1px, transparent 1px 2px) 0 100% / 100% 1px no-repeat, #fff2cc; }
.selected td { border-bottom-color: transparent; }
.totals { flex: none; background: #efefef; border-top: 1px solid #dfdfdf; }
.totals td { padding-left: 3px; }
.scroll { flex: none; display: flex; justify-content: space-between; height: 17px; background: #efefef; }
.scroll .thumb { width: calc(48% - 4px); padding-left: 5px; background: #b7c3e8; }
.detail .scroll .thumb { width: calc(46% - 2px); }
.scroll .end { width: 17px; padding-left: 6px; background: #b7c3e8; }
.splitter { flex: none; display: flex; justify-content: center; height: 8px; }
.splitter button { width: 50px; height: 8px; justify-content: center; border: 1px solid #6f8ad8; }
.splitter i { border: 3px solid transparent; border-top: 4px solid #606060; border-bottom: 0; }
.detail-tabs { flex: none; display: flex; height: 19px; }
.detail-tabs button { width: 60px; justify-content: center; font-weight: bold; background: #f5cb84; border: 1px solid #6f8ad8; border-bottom: 0; }

.status { flex: none; display: flex; align-items: center; height: 23px; padding: 0 8px 0 3px; gap: 1px; background: #b7c3e8; }
.version { margin-left: auto; }

.reminders { position: absolute; z-index: 2; right: 10px; bottom: 30px; width: 350px; padding: 0 14px 4px 12px; background: #fff; border: 1px solid #c0c0c0; }
.close { position: absolute; top: 2px; right: 6px; }
.rem-head { display: flex; align-items: center; justify-content: space-between; height: 39px; padding-right: 4px; }
.rem-head h2 { margin: 0; font-size: 16px; line-height: 20px; }
.rem-head a { color: #0878e0; }
.reminders ul { padding-left: 2px; }
.reminders li { display: flex; align-items: center; gap: 10px; height: 51px; padding-left: 8px; border-bottom: 1px solid #dcdcdc; }
.reminders li svg { width: 24px; height: 24px; }
.reminders li svg.tax { width: 20px; height: 20px; margin: 0 2px; }
</style>
